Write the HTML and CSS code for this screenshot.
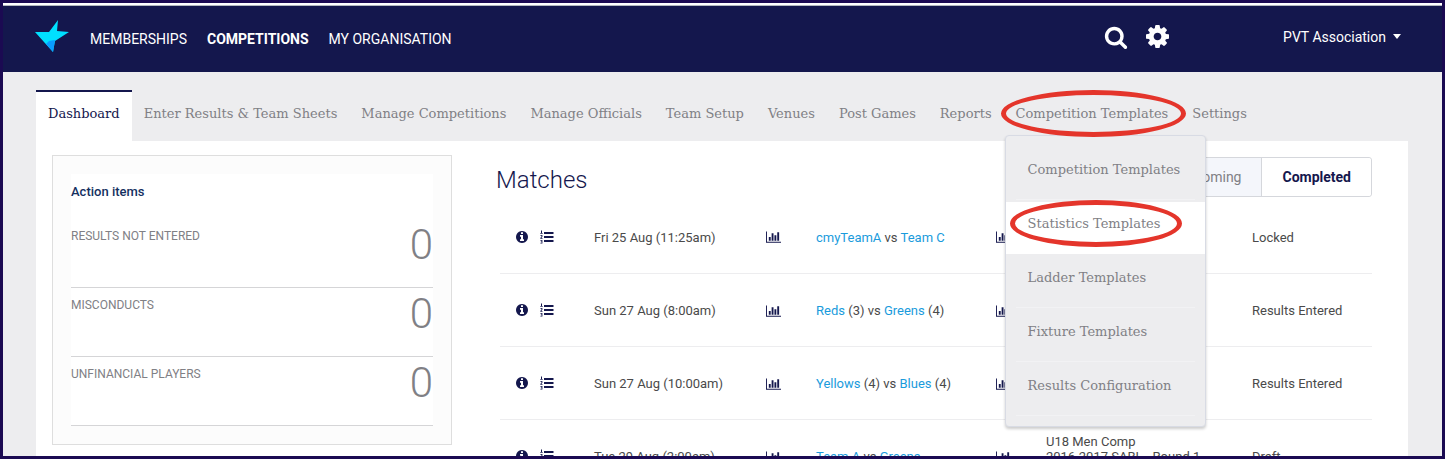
FILE: index.html
```
<!DOCTYPE html>
<html lang="en">
<head>
    <meta charset="UTF-8">
    <meta name="viewport" content="width=device-width, initial-scale=1.0">
    <title>Competitions Dashboard</title>
    <link rel="stylesheet" href="styles.css">
</head>
<body>
  <!-- Icons -->
  <svg class="icon-defs" aria-hidden="true">
    <symbol id="icon-search" viewBox="0 0 1792 1792"><path d="M1216 832q0-185-131.5-316.5t-316.5-131.5-316.5 131.5-131.5 316.5 131.5 316.5 316.5 131.5 316.5-131.5 131.5-316.5zm512 832q0 52-38 90t-90 38q-54 0-90-38l-343-342q-179 124-399 124-143 0-273.5-55.5t-225-150-150-225-55.5-273.5 55.5-273.5 150-225 225-150 273.5-55.5 273.5 55.5 225 150 150 225 55.5 273.5q0 220-124 399l343 343q37 37 37 90z"/></symbol>
    <symbol id="icon-cog" viewBox="128 128 1536 1536"><path d="M1152 896q0-106-75-181t-181-75-181 75-75 181 75 181 181 75 181-75 75-181zm512-109v222q0 12-8 23t-20 13l-185 28q-19 54-39 91 35 50 107 138 10 12 10 25t-9 23q-27 37-99 108t-94 71q-12 0-26-9l-138-108q-44 23-91 38-16 136-29 186-7 28-36 28h-222q-14 0-24.5-8.5t-11.5-21.5l-28-184q-49-16-90-37l-141 107q-10 9-25 9-14 0-25-11-126-114-165-168-7-10-7-23 0-12 8-23 15-21 51-66.5t54-70.5q-27-50-41-99l-183-27q-13-2-21-12.5t-8-23.5v-222q0-12 8-23t19-13l186-28q14-46 39-92-40-57-107-138-10-12-10-24 0-10 9-23 26-36 98.5-107.5t94.5-71.5q13 0 26 10l138 107q44-23 91-38 16-136 29-186 7-28 36-28h222q14 0 24.5 8.5t11.5 21.5l28 184q49 16 90 37l142-107q9-9 24-9 13 0 25 10 129 119 165 170 7 8 7 22 0 12-8 23-15 21-51 66.5t-54 70.5q26 50 41 98l183 28q13 2 21 12.5t8 23.5z"/></symbol>
    <symbol id="icon-info" viewBox="128 128 1536 1536"><path d="M1152 1376v-160q0-14-9-23t-23-9h-96v-512q0-14-9-23t-23-9h-320q-14 0-23 9t-9 23v160q0 14 9 23t23 9h96v320h-96q-14 0-23 9t-9 23v160q0 14 9 23t23 9h448q14 0 23-9t9-23zm-128-896v-160q0-14-9-23t-23-9h-192q-14 0-23 9t-9 23v160q0 14 9 23t23 9h192q14 0 23-9t9-23zm640 416q0 209-103 385.5t-279.5 279.5-385.5 103-385.5-103-279.5-279.5-103-385.5 103-385.5 279.5-279.5 385.5-103 385.5 103 279.5 279.5 103 385.5z"/></symbol>
    <symbol id="icon-list" viewBox="0 0 14 14"><path d="M4 2h9.500v2H4zM4 6h9.500v2H4zM4 10h9.500v2H4zM1 .5h1V3h.7v.8H.3V3H1zM.4 5h2v1.700L1.300 8h1.200v.8H.3V8l1.200-1.500v-.7H.4zM.4 10h2v3.500h-2v-.8h1.200v-.6H.8v-.7h.8v-.6H.4z"/></symbol>
    <symbol id="icon-chart" viewBox="0 128 2048 1536"><path d="M640 896v512h-256v-512zM1024 384v1024h-256v-1024zM2048 1536v128h-2048v-1536h128v1408zM1408 640v768h-256v-768zM1792 256v1152h-256v-1152z"/></symbol>
  </svg>

  <div class="page">
    <!-- Top bar -->
    <header class="navbar">
      <a href="#" class="logo" aria-label="Home">
        <svg width="34" height="33" viewBox="0 0 34 33">
          <path d="M0 12h14L23 0l-1 11 12 1-14 9-2 11z" fill="#00e0ff"/>
          <path d="M11 24l3-3 6-1-2 12z" fill="#0a9dff"/>
        </svg>
      </a>
      <nav class="main-nav">
        <a href="#">MEMBERSHIPS</a>
        <a href="#" class="active">COMPETITIONS</a>
        <a href="#">MY ORGANISATION</a>
      </nav>
      <div class="tools">
        <button type="button" aria-label="Search"><svg class="icon-search"><use href="#icon-search"/></svg></button>
        <button type="button" aria-label="Settings"><svg class="icon-cog"><use href="#icon-cog"/></svg></button>
      </div>
      <button type="button" class="account">PVT Association <span class="caret"></span></button>
    </header>

    <!-- Section tabs -->
    <ul class="tabs">
      <li class="active"><a href="#">Dashboard</a></li>
      <li><a href="#">Enter Results &amp; Team Sheets</a></li>
      <li><a href="#">Manage Competitions</a></li>
      <li><a href="#">Manage Officials</a></li>
      <li><a href="#">Team Setup</a></li>
      <li><a href="#">Venues</a></li>
      <li><a href="#">Post Games</a></li>
      <li><a href="#">Reports</a></li>
      <li class="has-menu">
        <a href="#">Competition Templates</a>
        <ul class="dropdown">
          <li><a href="#">Competition Templates</a></li>
          <li class="current"><a href="#">Statistics Templates</a><span class="ring"></span></li>
          <li><a href="#">Ladder Templates</a></li>
          <li><a href="#">Fixture Templates</a></li>
          <li><a href="#">Results Configuration</a></li>
        </ul>
        <span class="ring"></span>
      </li>
      <li><a href="#">Settings</a></li>
    </ul>

    <main class="content">
      <!-- Action items -->
      <aside class="actions">
        <div class="actions-inner">
          <h3>Action items</h3>
          <div class="action-item"><span>RESULTS NOT ENTERED</span><span class="count">0</span></div>
          <div class="action-item"><span>MISCONDUCTS</span><span class="count">0</span></div>
          <div class="action-item"><span>UNFINANCIAL PLAYERS</span><span class="count">0</span></div>
        </div>
      </aside>

      <!-- Matches -->
      <section class="matches">
        <div class="matches-head">
          <h2>Matches</h2>
          <div class="toggle">
            <button type="button">Upcoming</button>
            <button type="button" class="active">Completed</button>
          </div>
        </div>
        <table>
          <colgroup>
            <col class="col-icons"><col class="col-date"><col class="col-chart"><col class="col-teams"><col class="col-chart"><col class="col-comp"><col>
          </colgroup>
          <tr>
            <td class="icons"><svg class="icon-info"><use href="#icon-info"/></svg><svg class="icon-list"><use href="#icon-list"/></svg></td>
            <td>Fri 25 Aug (11:25am)</td>
            <td><svg class="icon-chart"><use href="#icon-chart"/></svg></td>
            <td><a href="#">cmyTeamA</a> vs <a href="#">Team C</a></td>
            <td><svg class="icon-chart"><use href="#icon-chart"/></svg></td>
            <td></td>
            <td>Locked</td>
          </tr>
          <tr>
            <td class="icons"><svg class="icon-info"><use href="#icon-info"/></svg><svg class="icon-list"><use href="#icon-list"/></svg></td>
            <td>Sun 27 Aug (8:00am)</td>
            <td><svg class="icon-chart"><use href="#icon-chart"/></svg></td>
            <td><a href="#">Reds</a> (3) vs <a href="#">Greens</a> (4)</td>
            <td><svg class="icon-chart"><use href="#icon-chart"/></svg></td>
            <td></td>
            <td>Results Entered</td>
          </tr>
          <tr>
            <td class="icons"><svg class="icon-info"><use href="#icon-info"/></svg><svg class="icon-list"><use href="#icon-list"/></svg></td>
            <td>Sun 27 Aug (10:00am)</td>
            <td><svg class="icon-chart"><use href="#icon-chart"/></svg></td>
            <td><a href="#">Yellows</a> (4) vs <a href="#">Blues</a> (4)</td>
            <td><svg class="icon-chart"><use href="#icon-chart"/></svg></td>
            <td></td>
            <td>Results Entered</td>
          </tr>
          <tr>
            <td class="icons"><svg class="icon-info"><use href="#icon-info"/></svg><svg class="icon-list"><use href="#icon-list"/></svg></td>
            <td>Tue 29 Aug (2:00am)</td>
            <td><svg class="icon-chart"><use href="#icon-chart"/></svg></td>
            <td><a href="#">Team A</a> vs <a href="#">Greens</a></td>
            <td><svg class="icon-chart"><use href="#icon-chart"/></svg></td>
            <td>U18 Men Comp<br>2016-2017 SABL - Round 1<br>&nbsp;</td>
            <td>Draft</td>
          </tr>
        </table>
      </section>
    </main>
  </div>
</body>
</html>
```
FILE: styles.css
```
* {
    box-sizing: border-box;
}
body {
    margin: 0;
    font-family: Roboto, sans-serif;
    font-size: 13px;
    line-height: 15px;
    color: #4a4a4a;
}
a {
    text-decoration: none;
}
button {
    font-family: inherit;
    font-size: 14px;
    cursor: pointer;
}
ul {
    list-style: none;
    margin: 0;
    padding: 0;
}
.icon-defs {
    display: none;
}
.page {
    height: 100vh;
    overflow: hidden;
    border: 3px solid #1b0a52;
    background-color: #ededef;
}

/* top bar */
.navbar {
    display: flex;
    align-items: center;
    height: 69px;
    padding: 0 41px 4px 32px;
    border-top: 2px solid white;
    box-shadow: inset 0 1px 0 #b5b9bf;
    background-color: #14174d;
}
.logo svg {
    display: block;
}
.main-nav {
    display: flex;
    gap: 20px;
    padding: 6px 0 0 21px;
    font-size: 14px;
}
.main-nav a {
    color: white;
}
.main-nav .active {
    font-weight: bold;
}
.tools {
    display: flex;
    align-items: center;
    gap: 18px;
    margin-left: auto;
}
.tools button {
    display: flex;
    padding: 0;
    border: none;
    background: none;
}
.tools svg {
    fill: white;
}
.icon-search {
    width: 24px;
    height: 24px;
}
.icon-cog {
    width: 23px;
    height: 23px;
}
.account {
    display: flex;
    align-items: center;
    gap: 7px;
    margin-left: 114px;
    padding: 0;
    border: none;
    background: none;
    color: white;
}
.caret {
    border: 4px solid transparent;
    border-top: 5px solid white;
    border-bottom: none;
}

/* tabs */
.tabs {
    display: flex;
    padding: 18px 33px 0;
    font-family: "Roboto Slab", "DejaVu Serif", serif;
    font-size: 13px;
    white-space: nowrap;
}
.tabs > li {
    position: relative;
}
.tabs > li > a {
    display: block;
    height: 51px;
    padding: 0 12px;
    border-top: 2px solid transparent;
    line-height: 44px;
    color: #808085;
}
.tabs > .active > a {
    background-color: white;
    border-top-color: #14174d;
    color: #14174d;
}
.dropdown {
    position: absolute;
    top: 45px;
    left: 1px;
    z-index: 2;
    width: 201px;
    padding: 10px 0;
    border: 1px solid #d8dbe4;
    border-radius: 4px;
    background-color: #ededef;
    box-shadow: 0 2px 3px rgba(0, 0, 0, 0.2);
}
.dropdown li {
    position: relative;
    height: 54px;
    padding: 0 10px;
}
.dropdown li a {
    display: block;
    height: 54px;
    padding-left: 12px;
    border-bottom: 1px solid #f2f2f4;
    line-height: 48px;
    color: #808085;
}
.dropdown .current {
    background: white content-box;
    padding: 2px 0 0;
}
.dropdown .current a {
    height: 52px;
    padding-left: 22px;
    border-color: white;
    line-height: 44px;
}
.ring {
    position: absolute;
    top: 0;
    left: -3px;
    z-index: 3;
    width: 185px;
    height: 47px;
    border: 5px solid #e4352b;
    border-radius: 50%;
}
.dropdown .ring {
    left: 4px;
    width: 172px;
}

/* main content */
.content {
    display: flex;
    align-items: flex-start;
    margin: 0 34px 0 33px;
    padding: 14px 36px 48px 16px;
    background-color: white;
}
.actions {
    flex: 0 0 400px;
    padding: 18px;
    border: 1px solid #dedede;
    background-color: #fcfcfc;
}
.actions-inner {
    background-color: white;
}
.actions h3 {
    margin: 0;
    padding: 10px 0 20px;
    font-size: 13px;
    font-weight: 500;
    color: #14305f;
}
.action-item {
    display: flex;
    justify-content: space-between;
    height: 69px;
    padding-top: 10px;
    border-bottom: 1px solid #d5d5d7;
    font-size: 12px;
    color: #808085;
}
.count {
    font-size: 42px;
    font-weight: 300;
    line-height: 32px;
}
.matches {
    flex: 1;
    padding-left: 48px;
}
.matches-head {
    display: flex;
    justify-content: space-between;
    height: 45px;
    padding-top: 2px;
}
.matches h2 {
    margin: 0 0 0 -4px;
    font-size: 24px;
    font-weight: 300;
    line-height: 46px;
    color: #14174d;
}
.toggle {
    display: flex;
    height: 40px;
    border: 1px solid #d5d7dc;
    border-radius: 3px;
}
.toggle button {
    padding: 0 20px;
    border: none;
    background-color: #f4f6fb;
    color: #808085;
}
.toggle .active {
    border-left: 1px solid #d5d7dc;
    border-radius: 0 3px 3px 0;
    background-color: white;
    font-weight: bold;
    color: #14174d;
}
table {
    width: 100%;
    table-layout: fixed;
    border-collapse: collapse;
}
td {
    height: 73px;
    padding: 2px 0 0;
    border-bottom: 1px solid #ededef;
    white-space: nowrap;
}
td a {
    color: #1a9bdc;
}
td svg {
    display: block;
    fill: #14174d;
}
td.icons {
    padding-top: 0;
}
.icons svg {
    display: inline-block;
    vertical-align: middle;
}
.icons .icon-info {
    width: 12px;
    height: 12px;
    margin: 0 12px 0 16px;
}
.icon-list {
    width: 14px;
    height: 14px;
}
.icon-chart {
    width: 15px;
    height: 12px;
}
.col-icons {
    width: 94px;
}
.col-date {
    width: 172px;
}
.col-chart {
    width: 50px;
}
.col-teams {
    width: 180px;
}
.col-comp {
    width: 206px;
}
```
